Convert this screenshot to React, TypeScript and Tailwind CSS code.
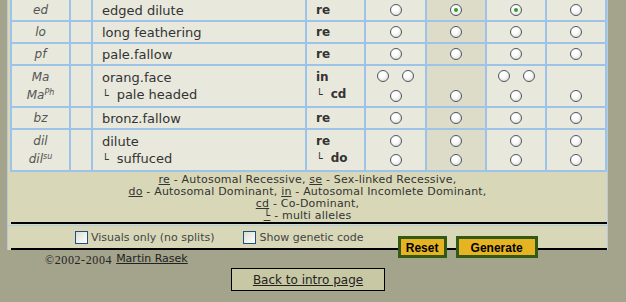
import React from "react";

const Radio = ({ checked }: { checked?: boolean }) => (
  <span className="flex h-[12px] w-[12px] items-center justify-center rounded-full border border-[#4e5660] bg-[radial-gradient(circle_at_40%_35%,#ffffff_30%,#d4d4cc)]">
    {checked && <span className="h-[4px] w-[4px] rounded-full bg-[#2e9e2e]" />}
  </span>
);

const Corner = () => <span className="mr-[8px] text-[11px]">└</span>;

type Cell = null | "one" | "checked" | "two" | "stack" | "low";

const RadioCell = ({ kind, dark }: { kind: Cell; dark?: boolean }) => {
  const bg = dark ? "bg-[#dcdcc8]" : "bg-[#e8e8dc]";
  if (kind === "stack")
    return (
      <div className={`${bg} flex flex-col items-center justify-center gap-[7px]`}>
        <Radio />
        <Radio />
      </div>
    );
  if (kind === "two")
    return (
      <div className={`${bg} flex flex-col items-center justify-center gap-[8px]`}>
        <div className="flex gap-[13px]">
          <Radio />
          <Radio />
        </div>
        <Radio />
      </div>
    );
  if (kind === "low")
    return (
      <div className={`${bg} flex flex-col items-center justify-end pb-[4px]`}>
        <Radio />
      </div>
    );
  return (
    <div className={`${bg} flex items-center justify-center`}>
      <Radio checked={kind === "checked"} />
    </div>
  );
};

const TableRow = ({
  sym,
  name,
  mode,
  cells,
  tall,
}: {
  sym: React.ReactNode;
  name: React.ReactNode;
  mode: React.ReactNode;
  cells: Cell[];
  tall?: boolean;
}) => (
  <div
    className={`grid grid-cols-[57px_20px_212px_57px_59px_58px_58px_58px] gap-[2px] ${
      tall ? "h-[40px]" : "h-[20px]"
    }`}
  >
    <div className="flex flex-col items-center justify-center bg-[#e8e8dc] text-[12px] leading-[18px] italic text-[#555]">
      {sym}
    </div>
    <div className="bg-[#e8e8dc]" />
    <div className="flex flex-col justify-center bg-[#e8e8dc] pl-[9px] text-[13px] leading-[17px] text-[#333]">
      {name}
    </div>
    <div className="flex flex-col justify-center bg-[#e8e8dc] pl-[9px] text-[12px] leading-[17px] font-bold text-[#333]">
      {mode}
    </div>
    {cells.map((c, i) => (
      <RadioCell key={i} kind={c} dark={i === 1} />
    ))}
  </div>
);

const Checkbox = () => (
  <span className="inline-block h-[13px] w-[13px] border border-[#1c5180] bg-[linear-gradient(135deg,#dcdcd6,#ffffff)]" />
);

export default function App() {
  return (
    <div className="h-[302px] w-[626px] overflow-hidden bg-[#a4a38c] font-['DejaVu_Sans',sans-serif]">
      <div className="ml-[7px] w-[601px] border-x border-[#b8cadb] bg-[#d8d8b8]">
        <div className="ml-[2px] flex w-[597px] flex-col gap-[2px] bg-[#9dc3e8] px-[2px] pb-[2px]">
          <TableRow sym="ed" name="edged dilute" mode="re" cells={["one", "checked", "checked", "one"]} />
          <TableRow sym="lo" name="long feathering" mode="re" cells={["one", "one", "one", "one"]} />
          <TableRow sym="pf" name="pale.fallow" mode="re" cells={["one", "one", "one", "one"]} />
          <TableRow
            tall
            sym={
              <>
                <span>Ma</span>
                <span>
                  Ma<sup className="text-[8px]">Ph</sup>
                </span>
              </>
            }
            name={
              <>
                <span>orang.face</span>
                <span>
                  <Corner />
                  pale headed
                </span>
              </>
            }
            mode={
              <>
                <span>in</span>
                <span>
                  <Corner />
                  cd
                </span>
              </>
            }
            cells={["two", "low", "two", "low"]}
          />
          <TableRow sym="bz" name="bronz.fallow" mode="re" cells={["one", "one", "one", "one"]} />
          <TableRow
            tall
            sym={
              <>
                <span>dil</span>
                <span>
                  dil<sup className="text-[8px]">su</sup>
                </span>
              </>
            }
            name={
              <>
                <span>dilute</span>
                <span>
                  <Corner />
                  suffuced
                </span>
              </>
            }
            mode={
              <>
                <span>re</span>
                <span>
                  <Corner />
                  do
                </span>
              </>
            }
            cells={["stack", "stack", "stack", "stack"]}
          />
        </div>

        <div className="flex h-[50px] flex-col items-center justify-center pt-[2px] text-[11px] leading-[12px] tracking-[0.2px] text-[#333]">
          <p>
            <u>re</u> - Autosomal Recessive, <u>se</u> - Sex-linked Recessive,
          </p>
          <p>
            <u>do</u> - Autosomal Dominant, <u>in</u> - Autosomal Incomlete Dominant,
          </p>
          <p>
            <u>cd</u> - Co-Dominant,
          </p>
          <p>
            <u>└</u> - multi alleles
          </p>
        </div>
        <div className="ml-[3px] h-[2px] w-[596px] bg-black" />
        <div className="mt-[1px] border-t border-[#b0cce6]">
          <div className="flex h-[22px] items-center text-[11px] text-[#444]">
            <label className="ml-[67px] flex items-center gap-[3px]">
              <Checkbox />
              <span className="mt-[3px]">Visuals only (no splits)</span>
            </label>
            <label className="ml-[29px] flex items-center gap-[3px]">
              <Checkbox />
              <span className="mt-[3px]">Show genetic code</span>
            </label>
            <div className="relative top-[10px] ml-[34px] flex gap-[9px] font-['Liberation_Sans',sans-serif] text-[12px] font-bold text-black">
              <button className="h-[22px] w-[49px] border-[3px] border-[#335a14] bg-[#e6b422]">Reset</button>
              <button className="h-[22px] w-[82px] border-[3px] border-[#335a14] bg-[#e6b422]">Generate</button>
            </div>
          </div>
          <div className="ml-[3px] h-[2px] w-[596px] bg-black" />
        </div>
      </div>

      <div className="ml-[45px] mt-[1px] flex h-[17px] items-center gap-[4px] text-[#222]">
        <span className="font-['Liberation_Serif',serif] text-[12px] tracking-[0.6px]">©2002-2004</span>
        <a className="text-[11px] underline">Martin Rasek</a>
      </div>
      <div className="flex justify-center pr-[10px]">
        <div className="flex h-[23px] w-[154px] items-center justify-center border border-black bg-[#c8c8a4] text-[12px] text-[#222] underline">
          Back to intro page
        </div>
      </div>
    </div>
  );
}
